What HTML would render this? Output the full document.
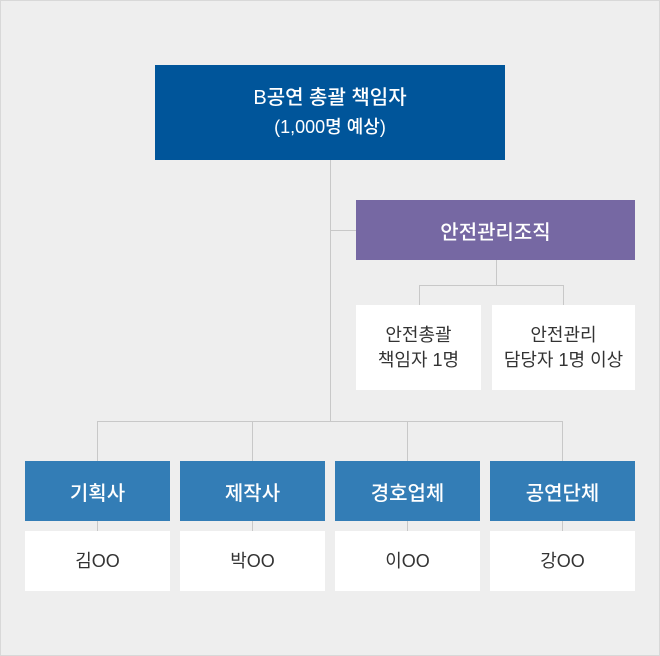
<!DOCTYPE html><html><head><meta charset="utf-8"><style>
*{margin:0;padding:0;box-sizing:border-box}
body{width:660px;height:656px;background:#eeeeee;position:relative;overflow:hidden;font-family:"Liberation Sans","Noto Sans CJK KR",sans-serif}
.frame{position:absolute;left:0;top:0;width:660px;height:656px;border:1px solid #d8d8d8}
.b{position:absolute;display:flex;align-items:center;justify-content:center;text-align:center}
.l{position:absolute;background:#c8c8c8}
.top{left:155px;top:65px;width:350px;height:95px;background:#00559a;color:#fff;font-size:20px;line-height:29px;flex-direction:column;font-weight:500}
.pur{left:356px;top:200px;width:279px;height:60px;background:#7668a3;color:#fff;font-size:20px;font-weight:500}
.w{background:#fff;color:#333;font-size:18px;line-height:25px}
.bl{background:#337db6;color:#fff;font-size:20px;top:461px;width:145px;height:60px;font-weight:500}
.wb{top:531px;width:145px;height:60px}
</style></head><body><div class="frame"></div>
<div class="l" style="left:330px;top:160px;width:1px;height:262px"></div>
<div class="l" style="left:330px;top:230px;width:26px;height:1px"></div>
<div class="l" style="left:496px;top:260px;width:1px;height:25px"></div>
<div class="l" style="left:419px;top:285px;width:145px;height:1px"></div>
<div class="l" style="left:419px;top:285px;width:1px;height:20px"></div>
<div class="l" style="left:563px;top:285px;width:1px;height:20px"></div>
<div class="l" style="left:97px;top:421px;width:466px;height:1px"></div>
<div class="l" style="left:97px;top:421px;width:1px;height:170px"></div>
<div class="l" style="left:252px;top:421px;width:1px;height:170px"></div>
<div class="l" style="left:407px;top:421px;width:1px;height:170px"></div>
<div class="l" style="left:562px;top:421px;width:1px;height:170px"></div>
<div class="b top"><div>B공연 총괄 책임자</div><div style="font-size:18px">(1,000명 예상)</div></div>
<div class="b pur">안전관리조직</div>
<div class="b w" style="left:356px;top:305px;width:125px;height:85px">안전총괄<br>책임자 1명</div>
<div class="b w" style="left:492px;top:305px;width:143px;height:85px">안전관리<br>담당자 1명 이상</div>
<div class="b bl" style="left:25px">기획사</div>
<div class="b bl" style="left:180px">제작사</div>
<div class="b bl" style="left:335px">경호업체</div>
<div class="b bl" style="left:490px">공연단체</div>
<div class="b w wb" style="left:25px">김OO</div>
<div class="b w wb" style="left:180px">박OO</div>
<div class="b w wb" style="left:335px">이OO</div>
<div class="b w wb" style="left:490px">강OO</div>
</body></html>
